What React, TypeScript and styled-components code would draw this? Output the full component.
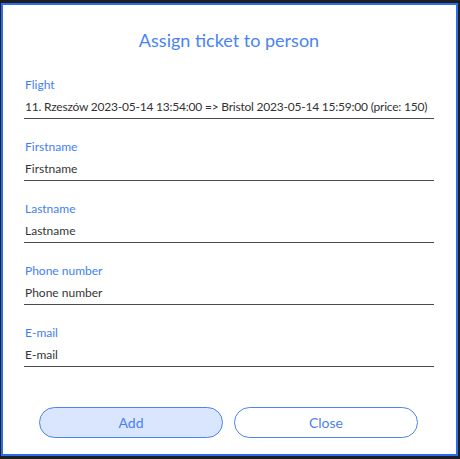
import React from "react";
import styled, { createGlobalStyle } from "styled-components";

const Global = createGlobalStyle`
  html, body { margin: 0; padding: 0; background: #1f1f1f; }
  body { font-family: Lato, "Noto Sans", sans-serif; }
  * { box-sizing: border-box; }
`;

const Dialog = styled.div`
  margin: 3px 2px 3px 1px;
  height: 453px;
  border: 2px solid #2d6ef0;
  background: #ffffff;
  padding: 23px 22px 0 21px;
  display: flex;
  flex-direction: column;
`;

const Title = styled.h1`
  margin: 0 0 25px;
  font-size: 18px;
  line-height: 24px;
  font-weight: 400;
  color: #4a84f2;
  text-align: center;
`;

const Form = styled.div`
  display: flex;
  flex-direction: column;
  gap: 20px;
`;

const Field = styled.label`
  display: flex;
  flex-direction: column;
`;

const Label = styled.span`
  font-size: 12px;
  line-height: 16px;
  color: #3f80f5;
  padding-left: 1px;
`;

const Input = styled.input<{ $tight?: boolean }>`
  font-family: inherit;
  font-size: 12px;
  line-height: 16px;
  height: 26px;
  padding: 5px 1px 4px;
  border: none;
  border-bottom: 1px solid #4a4a4a;
  outline: none;
  color: #333333;
  background: transparent;
  letter-spacing: ${(p) => (p.$tight ? "-0.22px" : "0")};
  &::placeholder { color: #363636; opacity: 1; }
`;

const Buttons = styled.div`
  margin-top: 40px;
  display: flex;
  justify-content: center;
  gap: 11px;
  padding-right: 1px;
`;

const Button = styled.button<{ $primary?: boolean }>`
  width: 184px;
  height: 31px;
  border-radius: 16px;
  border: 1.5px solid #4a84f2;
  background: ${(p) => (p.$primary ? "#dae6fd" : "#ffffff")};
  color: #4a7ff0;
  font-family: inherit;
  font-size: 14px;
  cursor: pointer;
`;

const fields = ["Firstname", "Lastname", "Phone number", "E-mail"];

export default function App() {
  return (
    <>
      <Global />
      <Dialog>
        <Title>Assign ticket to person</Title>
        <Form>
          <Field>
            <Label>Flight</Label>
            <Input
              $tight
              readOnly
              value="11. Rzeszów 2023-05-14 13:54:00 => Bristol 2023-05-14 15:59:00 (price: 150)"
            />
          </Field>
          {fields.map((f) => (
            <Field key={f}>
              <Label>{f}</Label>
              <Input placeholder={f} />
            </Field>
          ))}
        </Form>
        <Buttons>
          <Button $primary>Add</Button>
          <Button>Close</Button>
        </Buttons>
      </Dialog>
    </>
  );
}
